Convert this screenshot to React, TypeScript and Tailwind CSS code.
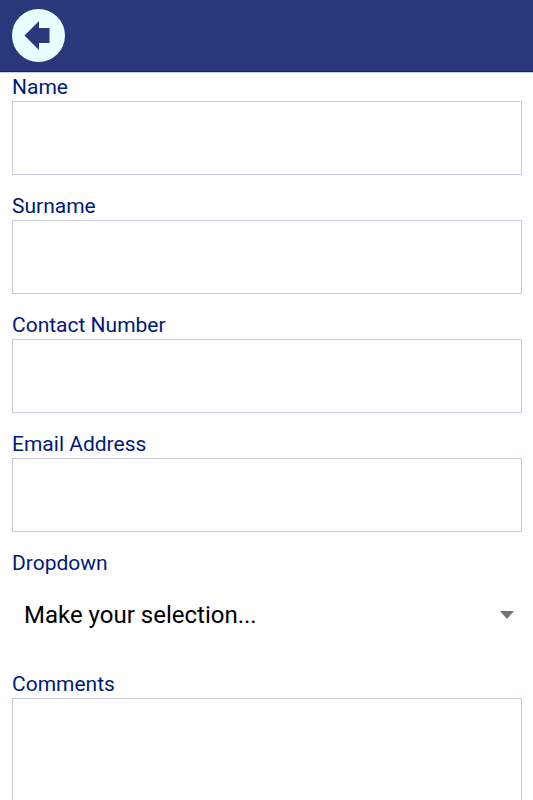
import type { ReactNode } from "react";

const textFields = [
  { id: "name", label: "Name", type: "text" },
  { id: "surname", label: "Surname", type: "text" },
  { id: "contact", label: "Contact Number", type: "tel" },
  { id: "email", label: "Email Address", type: "email" },
];

interface FieldProps {
  id: string;
  label: string;
  children: ReactNode;
}

function Field({ id, label, children }: FieldProps) {
  return (
    <div className="flex flex-col">
      <label htmlFor={id} className="text-[21px] leading-7 text-[#001a78]">
        {label}
      </label>
      {children}
    </div>
  );
}

export default function App() {
  return (
    <div className="min-h-screen bg-white font-[Roboto,sans-serif]">
      <header className="flex h-18 items-center border-b border-[#0a1f6e] bg-[#28387a] px-3">
        <button
          type="button"
          aria-label="Back"
          className="flex size-[53px] items-center justify-center rounded-full bg-[#e8ffff]"
        >
          <svg viewBox="0 0 53 53" className="size-full" fill="#28387a">
            <path d="M12.5 26.5 L27 12 V19 H37.5 V34 H27 V41 Z" />
          </svg>
        </button>
      </header>

      <form className="flex flex-col gap-[17px] border-t border-[#c3d0e4] pr-[11px] pl-3">
        {textFields.map((field) => (
          <Field key={field.id} id={field.id} label={field.label}>
            <input
              id={field.id}
              type={field.type}
              className="h-[74px] w-full border border-[#c8c8de] px-3 text-2xl outline-none"
            />
          </Field>
        ))}

        <Field id="dropdown" label="Dropdown">
          <div className="relative">
            <select
              id="dropdown"
              className="h-[76px] w-full appearance-none bg-transparent px-3 text-2xl text-black outline-none"
            >
              <option>Make your selection...</option>
            </select>
            <svg
              viewBox="0 0 14 8"
              className="pointer-events-none absolute top-1/2 right-2 h-2 w-3.5 -translate-y-1/2"
              fill="#757575"
            >
              <path d="M0 0 H14 L7 8 Z" />
            </svg>
          </div>
        </Field>

        <Field id="comments" label="Comments">
          <textarea
            id="comments"
            className="h-40 w-full resize-none border border-[#c8c8de] p-3 text-2xl outline-none"
          />
        </Field>
      </form>
    </div>
  );
}
